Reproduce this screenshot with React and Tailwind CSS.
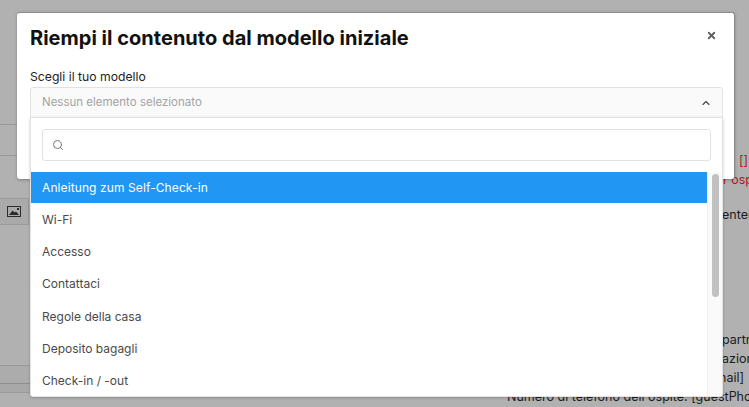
import {ChevronUp, Search, X} from "lucide-react";

const templates = [
    "Anleitung zum Self-Check-in",
    "Wi-Fi",
    "Accesso",
    "Contattaci",
    "Regole della casa",
    "Deposito bagagli",
    "Check-in / -out",
];

function ImageIcon() {
    return (
        <svg width="14" height="11" viewBox="0 0 14 11">
            <rect x="0.5" y="0.5" width="13" height="10" fill="none" stroke="#2b2b2b"/>
            <path d="M2 9 L5.5 4.5 L7.5 6.5 L9 5.5 L12 9 Z" fill="#2b2b2b"/>
            <rect x="10" y="2" width="2" height="2" fill="#2b2b2b"/>
        </svg>
    );
}

function BackgroundPage() {
    return (
        <div className="flex h-full justify-between">
            <div className="w-[30px] pt-[124px]">
                <div className="h-[31px] border-t border-[#9a9a9a]"/>
                <div className="h-[43px] border-t border-[#9a9a9a]"/>
                <div className="flex h-[27px] w-[29px] items-center justify-center border-y border-r border-[#9a9a9a] bg-[#aaaaaa]">
                    <ImageIcon/>
                </div>
                <div className="h-[140px]"/>
                <div className="h-[18px] border-t border-[#9a9a9a] bg-[#acacac]"/>
                <div className="h-[9px] border-t border-[#8f8f8f] bg-[#a8a8a8]"/>
                <div className="border-t border-[#9a9a9a]"/>
            </div>
            <div className="w-[242px] overflow-hidden whitespace-nowrap pt-[151px] text-[12.5px] leading-[19px] text-[#1c1c1c]">
                <p className="pl-[232px] text-[#b01818]">[]</p>
                <p className="pl-[216px] text-[#b01818]">r ospite</p>
                <p className="mt-[16px] pl-[215px]">enter</p>
                <p className="mt-[106px] pl-[215px]">partner</p>
                <p className="pl-[215px]">azione</p>
                <p className="pl-[212px]">nail]</p>
                <p>Numero di telefono dell'ospite: [guestPhone]</p>
            </div>
        </div>
    );
}

function TemplateSelect() {
    return (
        <div className="relative mt-px">
            <div className="flex h-[31px] items-center justify-between rounded-t-[3px] border border-[#e2e2e2] bg-[#fafafa] pl-[11px] pr-[10px] text-[11.5px] text-[#a3a3a3]">
                <span>Nessun elemento selezionato</span>
                <ChevronUp className="h-[12px] w-[12px] text-[#444444]" strokeWidth={2.2}/>
            </div>
            <div className="absolute left-0 right-0 top-[30px] z-10 h-[280px] rounded-b-[3px] border border-[#e2e2e2] bg-white shadow-[0_1px_3px_rgba(0,0,0,0.2)]">
                <div className="px-[11px] pt-[11px]">
                    <div className="flex h-[32px] items-center rounded-[3px] border border-[#e2e2e2] px-[9px]">
                        <Search className="-mt-px h-[12px] w-[12px] text-[#777777]" strokeWidth={2}/>
                    </div>
                </div>
                <div className="mt-[11px] flex">
                    <ul className="flex-1 text-[12px] text-[#4a4a4a]">
                        {templates.map((name, i) => (
                            <li
                                key={name}
                                className={i === 0
                                    ? "mb-[0.6px] flex h-[31px] items-center bg-[#2196f3] pl-[11px] tracking-[0.1px] text-white"
                                    : "flex h-[32.3px] items-center pl-[11px]"}
                            >
                                {name}
                            </li>
                        ))}
                    </ul>
                    <div className="h-[224px] w-[15px] border-l border-[#eeeeee] bg-[#fafafa] px-[3.5px] pt-[2px]">
                        <div className="h-[123px] rounded-full bg-[#c1c1c1]"/>
                    </div>
                </div>
            </div>
        </div>
    );
}

export default function App() {
    return (
        <div className="relative h-[407px] w-[749px] overflow-hidden bg-[#b1b1b1] font-['Inter',sans-serif]">
            <BackgroundPage/>
            <div className="absolute left-[17px] top-[12px] h-[167px] w-[718px] rounded-[3px] border-t border-r border-[#8c8c8c] bg-white pl-[13px] pr-[11px] pt-[11px] shadow-[0_1px_3px_rgba(0,0,0,0.3)]">
                <div className="flex items-center justify-between">
                    <h1 className="text-[20px] font-bold leading-[28px] tracking-[0.02px] text-[#111111]">
                        Riempi il contenuto dal modello iniziale
                    </h1>
                    <X className="mr-[6px] -mt-[6px] h-[11px] w-[11px] text-[#5f5f5f]" strokeWidth={4}/>
                </div>
                <label className="mt-[16px] block text-[12.2px] leading-[18px] text-[#222222]">
                    Scegli il tuo modello
                </label>
                <TemplateSelect/>
            </div>
        </div>
    );
}
